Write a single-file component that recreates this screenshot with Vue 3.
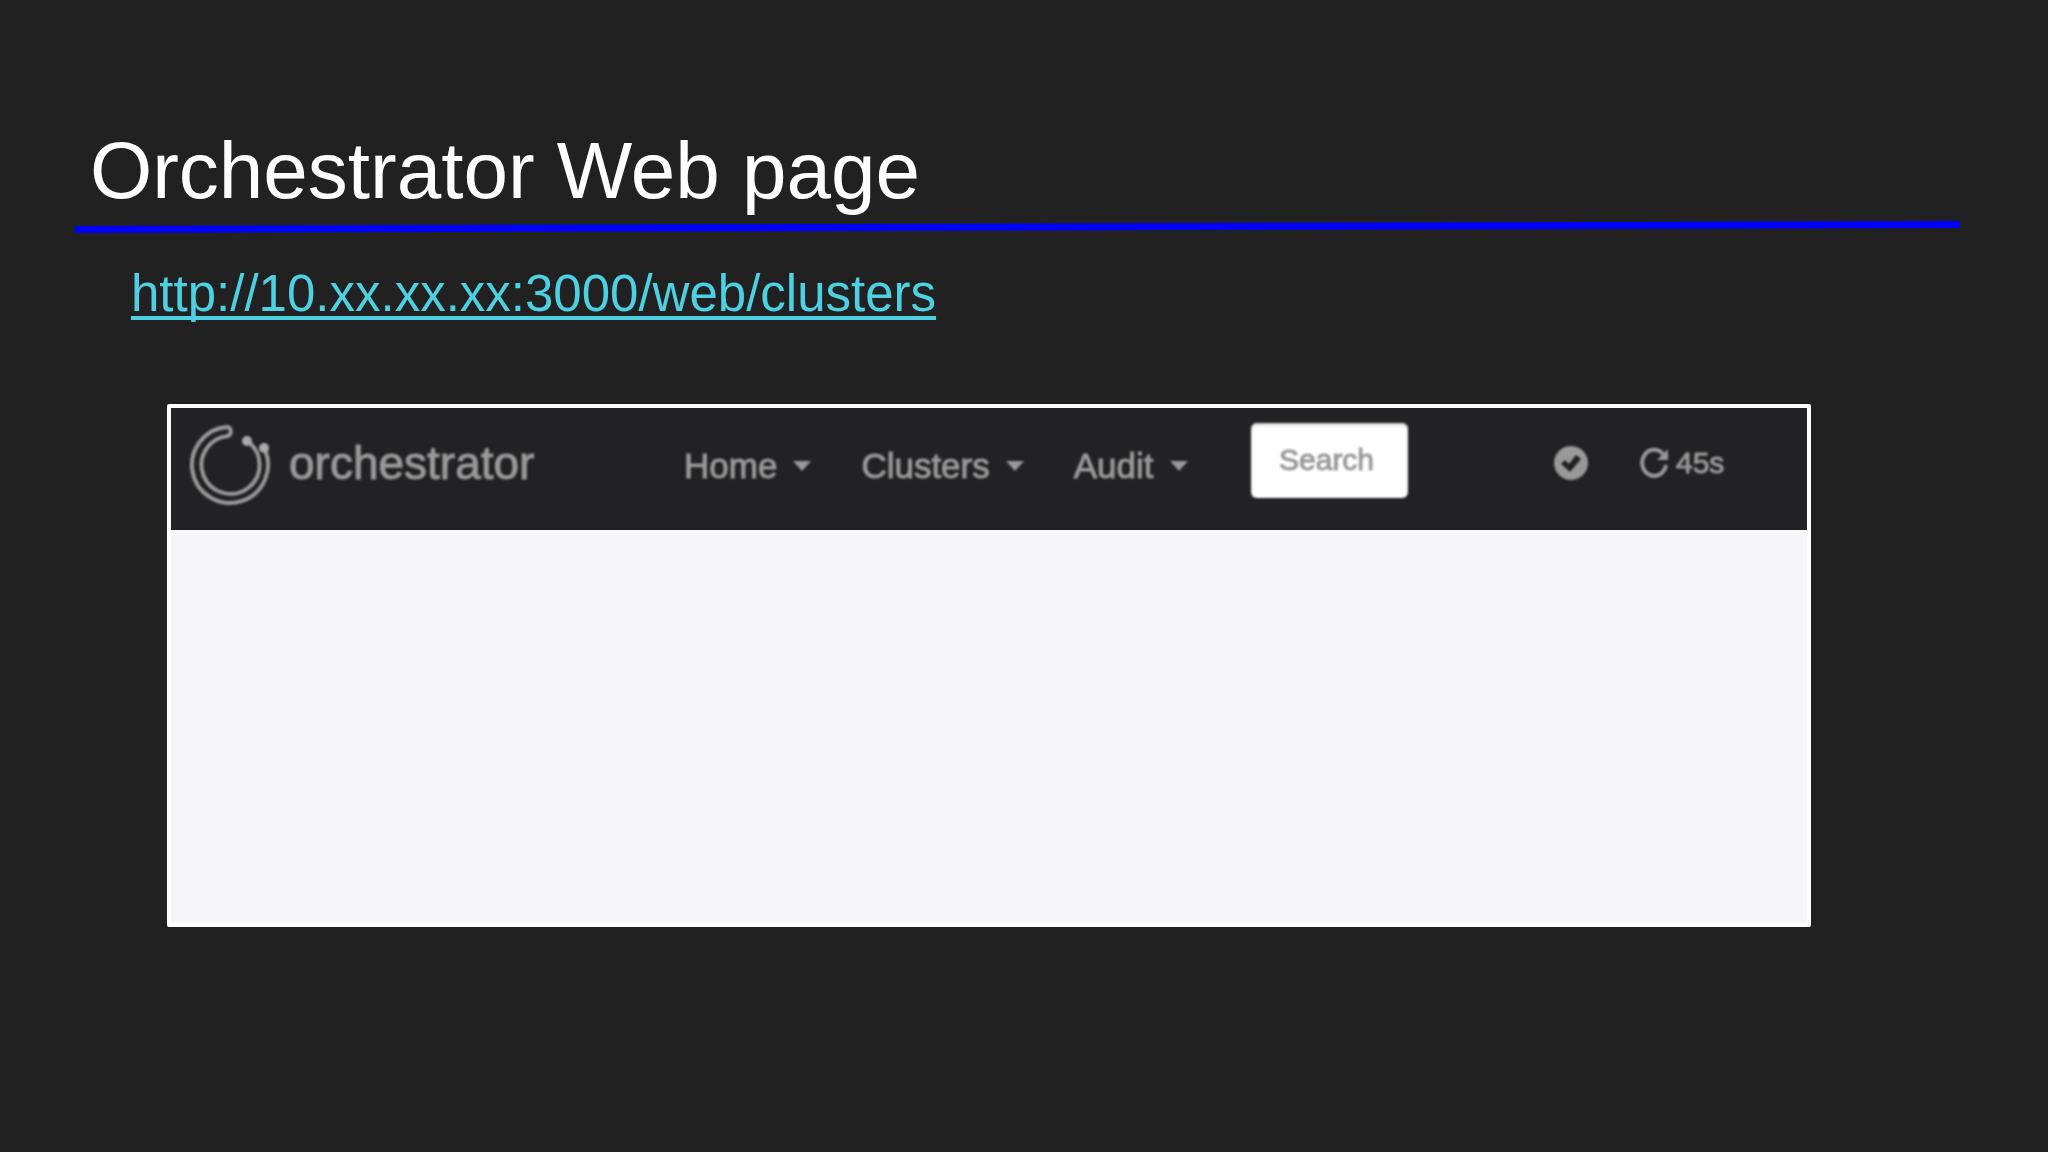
<script setup>
const menus = ['Home', 'Clusters', 'Audit']
</script>

<template>
  <main class="slide">
    <h1 class="title">Orchestrator Web page</h1>
    <svg class="rule" viewBox="0 0 1884 12" preserveAspectRatio="none" aria-hidden="true">
      <polygon points="0,5 1884,0 1884,7 0,12" fill="#0000ff" />
    </svg>
    <p class="address">
      <a href="http://10.xx.xx.xx:3000/web/clusters">http://10.xx.xx.xx:3000/web/clusters</a>
    </p>

    <section class="window">
      <nav class="navbar">
        <a class="brand" href="#">
          <svg class="logo" viewBox="0 0 84 84" aria-hidden="true">
            <g fill="none" stroke="#999" stroke-width="4" stroke-linecap="round">
              <path d="M75 25 A38 38 0 1 1 39 4 A5 5 0 0 1 39 13 A29 29 0 1 0 58 18" />
            </g>
            <circle cx="58" cy="18" r="5" fill="#aaa" />
            <circle cx="75" cy="25" r="5" fill="#aaa" />
          </svg>
          <span class="name">orchestrator</span>
        </a>
        <div class="menus">
          <button v-for="menu in menus" :key="menu" class="menu" type="button">
            {{ menu }}<span class="caret"></span>
          </button>
        </div>
        <input class="search" type="text" placeholder="Search" aria-label="Search" />
        <div class="status">
          <svg class="check" viewBox="0 0 36 36" aria-hidden="true">
            <circle cx="18" cy="18" r="17" fill="#999" />
            <path d="M8 19 L12 15 L16 19 L23 10 L28 14 L17 27 Z" fill="#222224" />
          </svg>
          <button class="refresh" type="button">
            <svg class="arrow" viewBox="0 0 32 32" aria-hidden="true">
              <path d="M25 7 A12 13 0 1 0 28 18" fill="none" stroke="#999" stroke-width="4" />
              <path d="M30 2 V13 H19 Z" fill="#999" />
            </svg>
            45s
          </button>
        </div>
      </nav>
      <div class="content"></div>
    </section>
  </main>
</template>

<style>
body {
  margin: 0;
  background: #212122;
}
</style>

<style scoped>
.slide {
  box-sizing: border-box;
  min-height: 100vh;
  padding: 125px 88px 0 75px;
  background: #212122;
  color: #fff;
  font-family: "Liberation Sans", Arial, sans-serif;
}

.title {
  margin: 0 0 4px 15px;
  font-size: 80px;
  line-height: 92px;
  font-weight: 400;
}

.rule {
  display: block;
  width: 100%;
  height: 12px;
}

.address {
  margin: 31px 0 0 56px;
  font-size: 51px;
  line-height: 60px;
}

.address a {
  color: #4dd0e1;
  text-decoration-thickness: 4px;
  text-underline-offset: 5px;
  text-decoration-skip-ink: none;
}

.window {
  margin: 80px 149px 0 92px;
  border: 4px solid #fff;
  border-radius: 2px;
  background: #f6f6f8;
}

.navbar {
  display: flex;
  align-items: flex-start;
  height: 122px;
  padding-left: 18px;
  background: #222224;
  color: #999;
}

.navbar > * {
  filter: blur(1px);
  -webkit-text-stroke: 1px #999;
}

.brand {
  display: flex;
  align-items: center;
  gap: 16px;
  width: 495px;
  margin-top: 15px;
  color: #999;
  font-size: 46px;
  text-decoration: none;
}

.name {
  padding-bottom: 4px;
  line-height: 80px;
}

.logo {
  width: 84px;
  height: 84px;
}

.menus {
  display: flex;
  gap: 50px;
  width: 567px;
  margin-top: 36px;
}

.menu,
.refresh {
  display: flex;
  align-items: center;
  padding: 0;
  border: 0;
  background: none;
  color: #999;
  font: 35px/44px "Liberation Sans", Arial, sans-serif;
}

.menu {
  gap: 16px;
}

.caret {
  border: 9px solid transparent;
  border-top: 10px solid #999;
  border-bottom: 0;
}

.search {
  box-sizing: border-box;
  width: 157px;
  height: 75px;
  margin-top: 15px;
  padding: 0 27px 2px 28px;
  border: 0;
  border-radius: 6px;
  background: #fff;
  box-shadow: inset 0 2px 3px #ccc;
  color: #999;
  font: 30px/36px "Liberation Sans", Arial, sans-serif;
}

.search::placeholder {
  color: #999;
  opacity: 1;
}

.status {
  display: flex;
  align-items: center;
  gap: 49px;
  margin: 33px 0 0 145px;
}

.check {
  width: 36px;
  height: 36px;
}

.refresh {
  gap: 6px;
  font-size: 30px;
}

.arrow {
  width: 32px;
  height: 32px;
}

.content {
  height: 393px;
}
</style>
